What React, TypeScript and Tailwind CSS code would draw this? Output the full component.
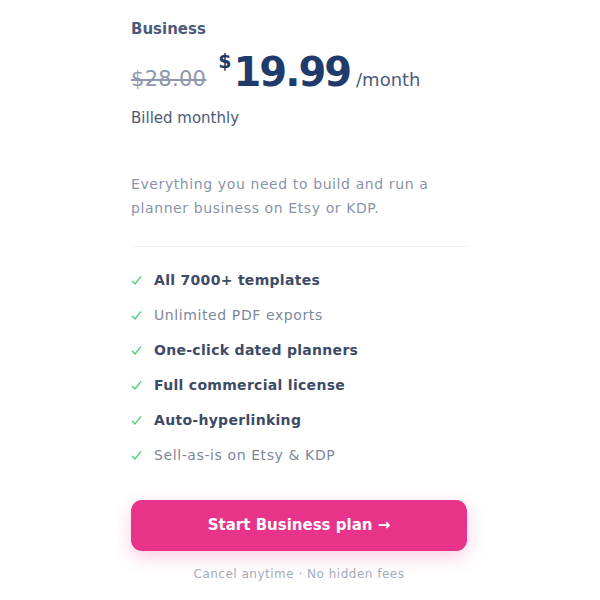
const features = [
  { label: "All 7000+ templates", strong: true },
  { label: "Unlimited PDF exports", strong: false },
  { label: "One-click dated planners", strong: true },
  { label: "Full commercial license", strong: true },
  { label: "Auto-hyperlinking", strong: true },
  { label: "Sell-as-is on Etsy & KDP", strong: false },
]

function Check() {
  return (
    <svg viewBox="0 0 12 12" className="w-[11px] h-[11px] shrink-0" fill="none">
      <path d="M1.5 6.8 L4.3 9.8 L10.5 2" stroke="#4ccf7f" strokeWidth="1.5" strokeLinecap="round" strokeLinejoin="round" />
    </svg>
  )
}

export default function App() {
  return (
    <div className="min-h-screen bg-white font-['DejaVu_Sans',sans-serif]">
      <div className="ml-[131px] w-[336px] pt-[19px]">
        <h3 className="text-[15px] font-bold text-[#4a5a7a] leading-5">Business</h3>

        <div className="mt-[10px] flex items-baseline leading-[46px]">
          <span className="text-[21px] text-[#8d98ad] line-through decoration-[1.5px] tracking-[0.3px]">$28.00</span>
          <span className="ml-[12px] text-[#1f3b6c] font-bold">
            <sup className="text-[19px] top-[-0.95em] mr-[2px]">$</sup>
            <span className="text-[40px] tracking-[-2px]">19.99</span>
          </span>
          <span className="ml-[6px] text-[18px] text-[#4d5c7a]">/month</span>
        </div>

        <p className="mt-[3px] text-[15px] text-[#4b5a76]">Billed monthly</p>

        <p className="mt-[42px] text-[14px] leading-6 tracking-[0.6px] text-[#8a94a8]">
          Everything you need to build and run a<br />planner business on Etsy or KDP.
        </p>

        <div className="mt-[26px] h-px bg-[#eceff3]" />

        <ul className="mt-[24px] flex flex-col gap-[16px]">
          {features.map(f => (
            <li key={f.label} className="flex items-center gap-[12px] h-[19px]">
              <Check />
              <span
                className={
                  f.strong
                    ? "text-[14px] font-bold tracking-[0.3px] text-[#3d4b67]"
                    : "text-[14px] tracking-[0.6px] text-[#7c879c]"
                }
              >
                {f.label}
              </span>
            </li>
          ))}
        </ul>

        <button className="mt-[35px] w-full h-[51px] rounded-[11px] bg-[#e7338a] text-white text-[15px] font-bold shadow-[0_6px_18px_rgba(231,51,138,0.25)]">
          Start Business plan →
        </button>

        <p className="mt-[14px] text-center text-[12px] tracking-[0.5px] text-[#a3acbc]">Cancel anytime · No hidden fees</p>
      </div>
    </div>
  )
}
